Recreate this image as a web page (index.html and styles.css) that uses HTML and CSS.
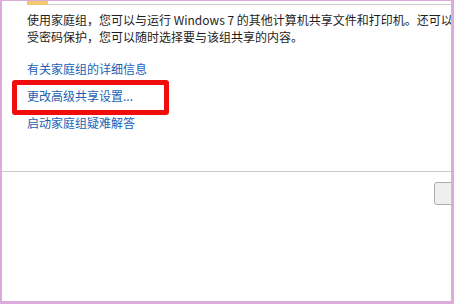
FILE: index.html
```html
<!DOCTYPE html>
<html lang="zh-CN">
<head>
<meta charset="utf-8">
<link rel="stylesheet" href="styles.css">
</head>
<body>
<div class="frame">
  <div class="window">
    <div class="topbar"><span class="tab-accent"></span><span class="tab-line"></span></div>
    <div class="content">
      <p class="intro">使用家庭组<span class="p">，</span>您可以与运行 Windows 7 的其他计算机共享文件和打印机<span class="p">。</span>还可以将媒体流式传输到设备<span class="p">。</span>家庭组<br>受密码保护<span class="p">，</span>您可以随时选择要与该组共享的内容<span class="p">。</span></p>
      <ul class="links">
        <li><a href="#">有关家庭组的详细信息</a></li>
        <li><a href="#">更改高级共享设置...</a></li>
        <li><a href="#">启动家庭组疑难解答</a></li>
      </ul>
      <div class="highlight"></div>
    </div>
    <div class="divider"></div>
    <div class="footer"><button class="btn">取消</button></div>
  </div>
</div>
</body>
</html>
```
FILE: styles.css
```css
html, body {
  margin: 0;
  padding: 0;
  width: 454px;
  height: 304px;
  overflow: hidden;
  background: #ffffff;
}
.frame {
  box-sizing: border-box;
  width: 454px;
  height: 304px;
  border-style: solid;
  border-color: #dcaadb;
  border-width: 1px 3px 3px 2px;
  background: #ffffff;
  overflow: hidden;
}
.window {
  position: relative;
  width: 449px;
  height: 300px;
  overflow: hidden;
  font-family: "Noto Sans CJK SC", "Noto Sans", sans-serif;
  font-size: 12px;
  color: #1e1e1e;
}
.topbar {
  display: flex;
  height: 4px;
  align-items: flex-end;
}
.tab-accent {
  width: 21px;
  margin-left: 25px;
  background: #f2c86c;
  align-self: stretch;
}
.tab-line {
  flex: 1;
  height: 1px;
  background: #cfcfcf;
}
.content {
  padding-left: 25px;
}
.intro {
  margin: 6px 0 0 0;
  line-height: 17px;
  white-space: nowrap;
}
.intro .p {
  display: inline-block;
  width: 12px;
  text-align: left;
}
.links {
  list-style: none;
  margin: 17px 0 0 0;
  padding: 0;
  line-height: 14px;
}
.links li {
  margin-bottom: 13px;
}
.links li:last-child {
  margin-bottom: 0;
}
.links a {
  color: #1a5fb4;
  text-decoration: none;
}
.highlight {
  position: absolute;
  left: 10px;
  top: 79px;
  width: 147px;
  height: 25px;
  border: 5px solid #f20d0d;
  border-radius: 3px;
}
.divider {
  height: 1px;
  margin-top: 41px;
  background: #cbcbcb;
}
.footer {
  padding: 10px 0 0 432px;
}
.btn {
  box-sizing: border-box;
  width: 75px;
  height: 23px;
  border: 1px solid #acacac;
  border-radius: 3px;
  background: #efefef;
  font-family: inherit;
  font-size: 12px;
  color: #1e1e1e;
  padding: 0;
}
```
